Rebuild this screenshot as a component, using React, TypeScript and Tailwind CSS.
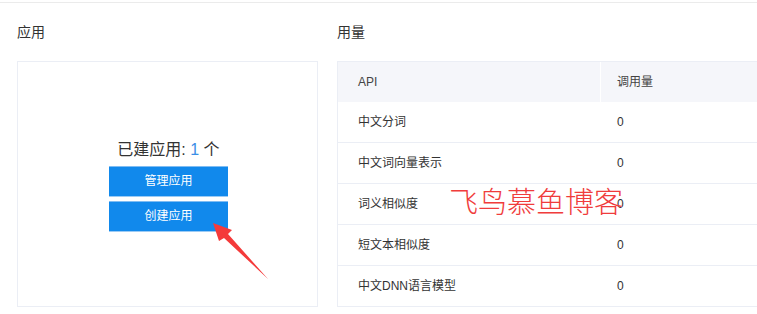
import React from "react";

const rows = [
  ["中文分词", "0"],
  ["中文词向量表示", "0"],
  ["词义相似度", "0"],
  ["短文本相似度", "0"],
  ["中文DNN语言模型", "0"],
];

export default function App() {
  return (
    <div
      className="relative w-[757px] h-[314px] overflow-hidden bg-white text-[#333]"
      style={{ fontFamily: '"Liberation Sans", "Noto Sans CJK SC", sans-serif' }}
    >
      <div className="h-[2px]" />
      <div className="h-px bg-[#ebebeb]" />
      <div className="flex gap-[19px] pl-[17px] pt-[19px]">
        <div className="w-[301px] shrink-0 flex flex-col">
          <h2 className="text-[14px] leading-[20px] text-[#333] font-normal">应用</h2>
          <div className="mt-[19px] h-[246px] border border-[#ebeef5] flex flex-col items-center justify-center">
            <div className="text-[16px] leading-[22px] text-[#333] mb-[5px] mt-[2px] pl-[2px]">
              已建应用: <span className="text-[#3a8ee6]">1</span> 个
            </div>
            <button className="ml-[2px] w-[119px] h-[31px] bg-[#1189ec] border-y border-t-[#7fbcf2] border-b-[#9ccbf4] text-white text-[12px] leading-[29px]">
              管理应用
            </button>
            <button className="ml-[2px] mt-[4px] w-[119px] h-[31px] bg-[#1189ec] border-y border-t-[#7fbcf2] border-b-[#9ccbf4] text-white text-[12px] leading-[29px]">
              创建应用
            </button>
          </div>
        </div>
        <div className="w-[440px] shrink-0 flex flex-col">
          <h2 className="text-[14px] leading-[20px] text-[#333] font-normal">用量</h2>
          <div className="mt-[19px] border-t border-l border-[#ebeef5]">
            <div className="grid grid-cols-[262px_1fr] h-[40px] bg-[#f5f6fa] text-[12px] text-[#444]">
              <div className="flex items-center pl-[20px]">API</div>
              <div className="flex items-center pl-[16px] border-l border-white">调用量</div>
            </div>
            {rows.map(([name, v]) => (
              <div
                key={name}
                className="grid grid-cols-[262px_1fr] h-[41px] border-b border-[#ebeef5] text-[12px] text-[#333]"
              >
                <div className="flex items-center pl-[20px]">{name}</div>
                <div className="flex items-center pl-[17px]">{v}</div>
              </div>
            ))}
          </div>
        </div>
      </div>

      <div
        className="absolute left-[449px] top-[184px] text-[29px] leading-[32px] text-[#f03c3c] font-light whitespace-nowrap"
        style={{ fontFamily: '"Noto Sans CJK SC", sans-serif' }}
      >
        飞鸟慕鱼博客
      </div>

      <svg
        className="absolute left-[200px] top-[210px]"
        width="80"
        height="80"
        viewBox="0 0 80 80"
      >
        <polygon
          points="13,13 32,20 28,24 68,69 24,28 19,31"
          fill="#f43a3a"
        />
      </svg>
    </div>
  );
}
